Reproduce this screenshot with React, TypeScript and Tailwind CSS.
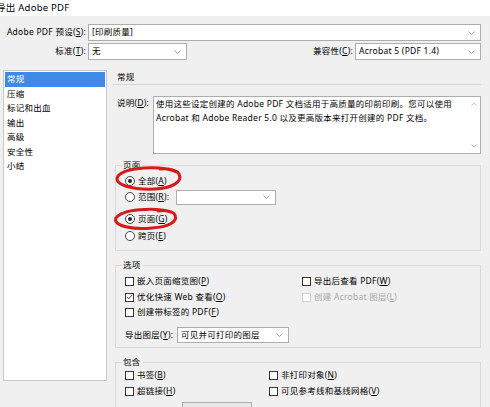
import type { ReactNode } from 'react';

const Chevron = () => (
    <svg width="7" height="4" viewBox="0 0 7 4" className="shrink-0">
        <path d="M0.5 0.5 L3.5 3.5 L6.5 0.5" fill="none" stroke="#8a8a8a" strokeWidth="0.8" />
    </svg>
);

function Select({ value, className }: { value: string; className: string }) {
    return (
        <div className={`flex items-center justify-between bg-white border border-[#adadad] pl-[3px] pr-[5px] ${className}`}>
            <span>{value}</span>
            <Chevron />
        </div>
    );
}

// label with underlined access key, e.g. 预设(S):
function Acc({ text, k, colon = false }: { text: string; k: string; colon?: boolean }) {
    return (
        <span className="whitespace-nowrap">
            {text}(<u>{k}</u>){colon ? ':' : ''}
        </span>
    );
}

function Radio({ checked = false, children }: { checked?: boolean; children: ReactNode }) {
    return (
        <div className="flex items-center h-[16px]">
            <span className="w-[10px] h-[10px] rounded-full border border-[#444] bg-white flex items-center justify-center shrink-0">
                {checked && <span className="w-[4px] h-[4px] rounded-full bg-[#222]" />}
            </span>
            <span className="ml-[3px] flex items-center">{children}</span>
        </div>
    );
}

function Check({ checked = false, disabled = false, children }: { checked?: boolean; disabled?: boolean; children: ReactNode }) {
    return (
        <div className={`flex items-center h-[15.5px] ${disabled ? 'text-[#a8a8a8]' : ''}`}>
            <span className={`w-[9px] h-[9px] border bg-white flex items-center justify-center shrink-0 ${disabled ? 'border-[#d0d0d0]' : 'border-[#333]'}`}>
                {checked && (
                    <svg width="7" height="6" viewBox="0 0 7 6">
                        <path d="M0.8 3 L2.7 4.9 L6.3 0.8" fill="none" stroke="#333" strokeWidth="0.9" />
                    </svg>
                )}
            </span>
            <span className="ml-[3px]">{children}</span>
        </div>
    );
}

const sections = ['常规', '压缩', '标记和出血', '输出', '高级', '安全性', '小结'];

export default function App() {
    return (
        <div className="relative w-[490px] h-[407px] overflow-hidden bg-[#f0f0f0] text-[8.5px] tracking-[0.25px] text-black font-['Noto_Sans','Noto_Sans_CJK_SC',sans-serif]">
            <div className="h-[16px] bg-white flex items-center">
                <span className="-ml-[4px] text-[9.5px]">导出 Adobe PDF</span>
            </div>

            <div className="pt-[8px]">
                <div className="flex items-center h-[17px]">
                    <div className="w-[86px] text-right"><Acc text="Adobe PDF 预设" k="S" colon /></div>
                    <Select value="[印刷质量]" className="ml-[2px] w-[393px] h-[17px]" />
                </div>
                <div className="flex items-center h-[17px] mt-[2px] w-[481px]">
                    <div className="w-[86px] text-right"><Acc text="标准" k="T" colon /></div>
                    <Select value="无" className="ml-[2px] w-[99px] h-[17px]" />
                    <div className="ml-auto mr-[2px]"><Acc text="兼容性" k="C" colon /></div>
                    <Select value="Acrobat 5 (PDF 1.4)" className="w-[126px] h-[17px]" />
                </div>
            </div>

            <div className="flex mt-[10px]">
                <div className="ml-[3px] w-[104px] h-[311px] bg-white border border-[#c8c8c8] p-[1px]">
                    {sections.map((s, i) => (
                        <div
                            key={s}
                            className={`h-[14.5px] leading-[14.5px] pl-[2px] ${i === 0 ? 'bg-[#3e8ae6] text-white' : ''}`}
                        >
                            {s}
                        </div>
                    ))}
                </div>

                <div className="ml-[6px] w-[368px]">
                    <div className="h-[15px] flex items-center pl-[4px] border-b border-[#d6d6d6]">常规</div>

                    <div className="flex mt-[11px]">
                        <div className="w-[40px] pl-[4px] leading-[14px]"><Acc text="说明" k="D" colon /></div>
                        <div className="w-[328px] h-[58px] bg-white border border-[#adadad] flex">
                            <div className="flex-1 pl-[2px] leading-[14px]">
                                使用这些设定创建的 Adobe PDF 文档适用于高质量的印前印刷。您可以使用
                                <br />
                                Acrobat 和 Adobe Reader 5.0 以及更高版本来打开创建的 PDF 文档。
                            </div>
                            <div className="w-[12px] flex flex-col items-center justify-between py-[5px]">
                                <svg width="6" height="4" viewBox="0 0 6 4"><path d="M0.5 3.5 L3 1 L5.5 3.5" fill="none" stroke="#b0b0b0" strokeWidth="0.8" /></svg>
                                <svg width="6" height="4" viewBox="0 0 6 4"><path d="M0.5 0.5 L3 3 L5.5 0.5" fill="none" stroke="#b0b0b0" strokeWidth="0.8" /></svg>
                            </div>
                        </div>
                    </div>

                    <fieldset className="mt-[6px] ml-[2px] w-[366px] border border-[#d9d9d9] px-0">
                        <legend className="ml-[6px] px-[1px] leading-[10px]">页面</legend>
                        <div className="pl-[9px] pt-[3px] pb-[6px]">
                            <Radio checked><Acc text="全部" k="A" /></Radio>
                            <Radio>
                                <span className="w-[38px]"><Acc text="范围" k="R" colon /></span>
                                <Select value="" className="w-[100px] h-[15px]" />
                            </Radio>
                            <div className="mt-[6px]"><Radio checked><Acc text="页面" k="G" /></Radio></div>
                            <div className="mt-[1px]"><Radio><Acc text="跨页" k="E" /></Radio></div>
                        </div>
                    </fieldset>

                    <fieldset className="mt-[9px] ml-[2px] w-[366px] border border-[#d9d9d9] px-0">
                        <legend className="ml-[6px] px-[1px] leading-[10px]">选项</legend>
                        <div className="pl-[9px] pt-[4px] pb-[4px]">
                            <div className="grid grid-cols-[177px_1fr]">
                                <Check><Acc text="嵌入页面缩览图" k="P" /></Check>
                                <Check><Acc text="导出后查看 PDF" k="W" /></Check>
                                <Check checked><Acc text="优化快速 Web 查看" k="O" /></Check>
                                <Check disabled><Acc text="创建 Acrobat 图层" k="L" /></Check>
                                <Check><Acc text="创建带标签的 PDF" k="F" /></Check>
                            </div>
                            <div className="flex items-center mt-[6.5px] h-[16px]">
                                <span className="w-[52px]"><Acc text="导出图层" k="Y" colon /></span>
                                <Select value="可见并可打印的图层" className="w-[112px] h-[16px]" />
                            </div>
                        </div>
                    </fieldset>

                    <fieldset className="mt-[9px] ml-[2px] w-[366px] border border-[#d9d9d9] px-0">
                        <legend className="ml-[6px] px-[1px] leading-[10px]">包含</legend>
                        <div className="pl-[9px] pt-[1px] pb-[6px]">
                            <div className="grid grid-cols-[144px_1fr]">
                                <Check><Acc text="书签" k="B" /></Check>
                                <Check><Acc text="非打印对象" k="N" /></Check>
                                <Check><Acc text="超链接" k="H" /></Check>
                                <Check><Acc text="可见参考线和基线网格" k="V" /></Check>
                            </div>
                            <div className="mt-[3px] ml-[57px] w-[70px] h-[15px] border border-[#adadad] bg-[#e8e8e8]" />
                        </div>
                    </fieldset>
                </div>
            </div>

            {/* red hand-drawn marks */}
            <svg className="absolute inset-0 pointer-events-none" width="490" height="407" viewBox="0 0 490 407">
                <path
                    d="M177 172 C160 165 126 167 118 176 C112 185 134 190 155 189 C172 188 183 182 179 174 C177 170 168 168 160 169"
                    fill="none" stroke="#d41c1c" strokeWidth="3" strokeLinecap="round"
                />
                <path
                    d="M171 212 C155 207 122 209 116 218 C112 226 134 230 152 228 C168 227 178 222 175 215 C173 211 165 210 158 211"
                    fill="none" stroke="#d41c1c" strokeWidth="3" strokeLinecap="round"
                />
            </svg>
        </div>
    );
}
